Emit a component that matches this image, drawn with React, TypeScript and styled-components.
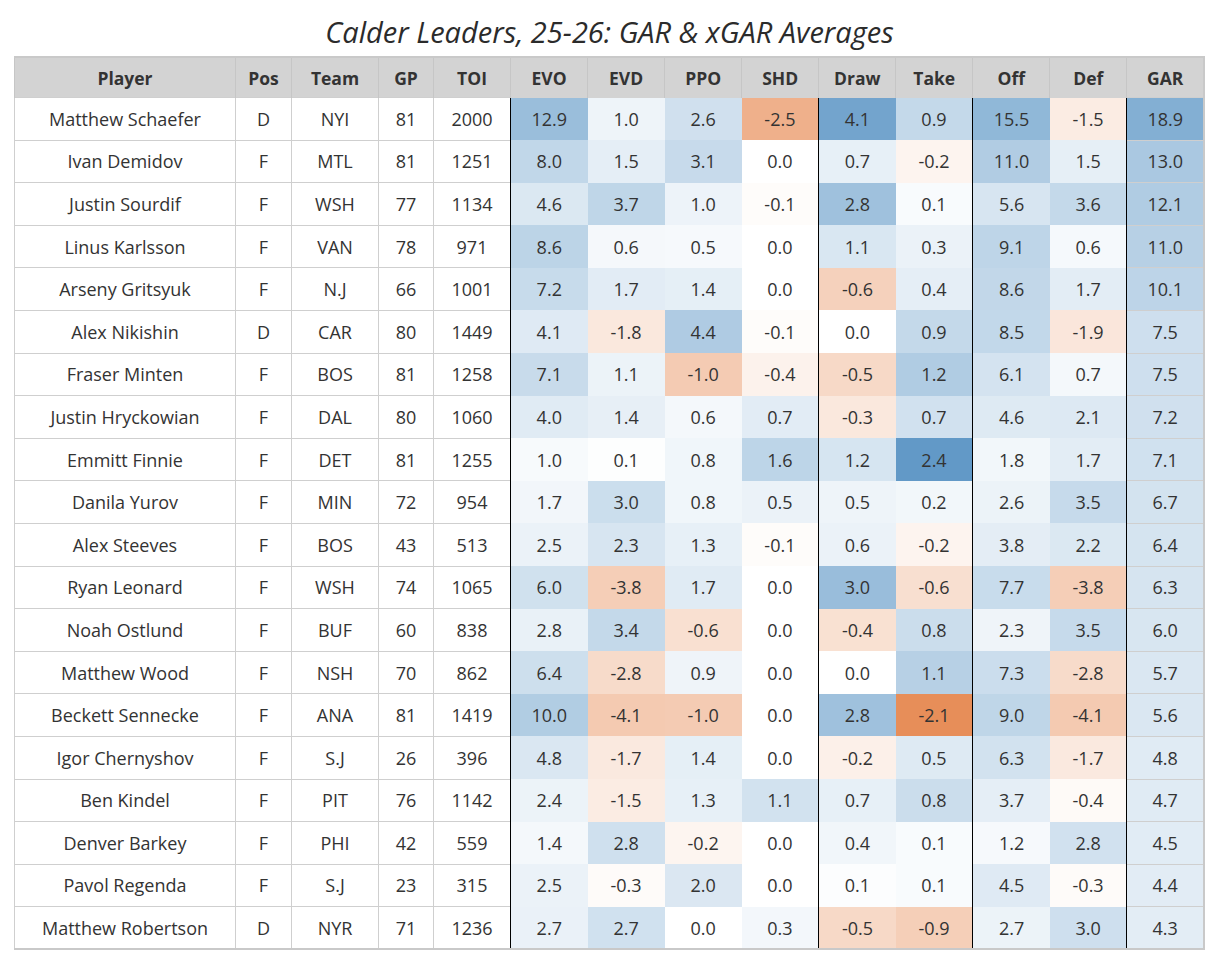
import React from "react";
import styled, { createGlobalStyle } from "styled-components";

type Row = [string, string, string, number, number, ...number[]];

const rows: Row[] = [
  ["Matthew Schaefer", "D", "NYI", 81, 2000, 12.9, 1.0, 2.6, -2.5, 4.1, 0.9, 15.5, -1.5, 18.9],
  ["Ivan Demidov", "F", "MTL", 81, 1251, 8.0, 1.5, 3.1, 0.0, 0.7, -0.2, 11.0, 1.5, 13.0],
  ["Justin Sourdif", "F", "WSH", 77, 1134, 4.6, 3.7, 1.0, -0.1, 2.8, 0.1, 5.6, 3.6, 12.1],
  ["Linus Karlsson", "F", "VAN", 78, 971, 8.6, 0.6, 0.5, 0.0, 1.1, 0.3, 9.1, 0.6, 11.0],
  ["Arseny Gritsyuk", "F", "N.J", 66, 1001, 7.2, 1.7, 1.4, 0.0, -0.6, 0.4, 8.6, 1.7, 10.1],
  ["Alex Nikishin", "D", "CAR", 80, 1449, 4.1, -1.8, 4.4, -0.1, 0.0, 0.9, 8.5, -1.9, 7.5],
  ["Fraser Minten", "F", "BOS", 81, 1258, 7.1, 1.1, -1.0, -0.4, -0.5, 1.2, 6.1, 0.7, 7.5],
  ["Justin Hryckowian", "F", "DAL", 80, 1060, 4.0, 1.4, 0.6, 0.7, -0.3, 0.7, 4.6, 2.1, 7.2],
  ["Emmitt Finnie", "F", "DET", 81, 1255, 1.0, 0.1, 0.8, 1.6, 1.2, 2.4, 1.8, 1.7, 7.1],
  ["Danila Yurov", "F", "MIN", 72, 954, 1.7, 3.0, 0.8, 0.5, 0.5, 0.2, 2.6, 3.5, 6.7],
  ["Alex Steeves", "F", "BOS", 43, 513, 2.5, 2.3, 1.3, -0.1, 0.6, -0.2, 3.8, 2.2, 6.4],
  ["Ryan Leonard", "F", "WSH", 74, 1065, 6.0, -3.8, 1.7, 0.0, 3.0, -0.6, 7.7, -3.8, 6.3],
  ["Noah Ostlund", "F", "BUF", 60, 838, 2.8, 3.4, -0.6, 0.0, -0.4, 0.8, 2.3, 3.5, 6.0],
  ["Matthew Wood", "F", "NSH", 70, 862, 6.4, -2.8, 0.9, 0.0, 0.0, 1.1, 7.3, -2.8, 5.7],
  ["Beckett Sennecke", "F", "ANA", 81, 1419, 10.0, -4.1, -1.0, 0.0, 2.8, -2.1, 9.0, -4.1, 5.6],
  ["Igor Chernyshov", "F", "S.J", 26, 396, 4.8, -1.7, 1.4, 0.0, -0.2, 0.5, 6.3, -1.7, 4.8],
  ["Ben Kindel", "F", "PIT", 76, 1142, 2.4, -1.5, 1.3, 1.1, 0.7, 0.8, 3.7, -0.4, 4.7],
  ["Denver Barkey", "F", "PHI", 42, 559, 1.4, 2.8, -0.2, 0.0, 0.4, 0.1, 1.2, 2.8, 4.5],
  ["Pavol Regenda", "F", "S.J", 23, 315, 2.5, -0.3, 2.0, 0.0, 0.1, 0.1, 4.5, -0.3, 4.4],
  ["Matthew Robertson", "D", "NYR", 71, 1236, 2.7, 2.7, 0.0, 0.3, -0.5, -0.9, 2.7, 3.0, 4.3],
];

const infoCols = [
  { key: "Player", w: 221 },
  { key: "Pos", w: 56 },
  { key: "Team", w: 87 },
  { key: "GP", w: 55 },
  { key: "TOI", w: 77 },
];

// stat columns: scale for positive values, scale for negative values
const stats = [
  { key: "EVO", pos: 21, neg: 10 },
  { key: "EVD", pos: 9.5, neg: 10 },
  { key: "PPO", pos: 9, neg: 2.5 },
  { key: "SHD", pos: 4, neg: 4.1 },
  { key: "Draw", pos: 4.8, neg: 1.7 },
  { key: "Take", pos: 2.5, neg: 2.4 },
  { key: "Off", pos: 23, neg: 10 },
  { key: "Def", pos: 10, neg: 10 },
  { key: "GAR", pos: 25, neg: 10 },
];

const dividers = ["EVO", "Draw", "Off", "GAR"];

const BLUE = [91, 149, 197];
const ORANGE = [228, 126, 65];

function shade(v: number, pos: number, neg: number) {
  const base = v >= 0 ? BLUE : ORANGE;
  const t = Math.min(1, Math.abs(v) / (v >= 0 ? pos : neg));
  const c = base.map((b) => Math.round(255 - (255 - b) * t));
  return `rgb(${c[0]}, ${c[1]}, ${c[2]})`;
}

const GlobalStyle = createGlobalStyle`
  body {
    margin: 0;
    background: #fff;
    font-family: "Open Sans", "Noto Sans", sans-serif;
    color: #333;
  }
`;

const Page = styled.div`
  padding: 0 15px 0 14px;
`;

const Title = styled.h1`
  margin: 0;
  height: 56px;
  line-height: 64px;
  text-align: center;
  font-size: 29px;
  font-style: italic;
  font-weight: 400;
  color: #2b2b2b;
`;

const Table = styled.table`
  width: 1191px;
  table-layout: fixed;
  border-collapse: collapse;
  border: 2px solid #c9c9c9;
  border-left-width: 1px;
`;

const Col = styled.col<{ $w?: number }>`
  width: ${(p) => (p.$w ? `${p.$w}px` : "auto")};
`;

const HeadCell = styled.th`
  height: 39px;
  padding: 0;
  background: #d3d3d3;
  border-left: 1px solid #c6c6c6;
  font-size: 17.5px;
  font-weight: 700;
  color: #333;
  text-align: center;
`;

const BodyRow = styled.tr`
  height: 42.6px;
`;

const Cell = styled.td<{ $divider?: boolean; $grid?: boolean }>`
  padding: 0;
  text-align: center;
  font-size: 18px;
  color: #333;
  border-top: ${(p) => (p.$grid ? "1px solid #cfcfcf" : "none")};
  border-left: ${(p) =>
    p.$divider ? "1px solid #000" : p.$grid ? "1px solid #cfcfcf" : "none"};
`;

export default function App() {
  return (
    <Page>
      <GlobalStyle />
      <Title>Calder Leaders, 25-26: GAR &amp; xGAR Averages</Title>
      <Table>
        <colgroup>
          {infoCols.map((c) => (
            <Col key={c.key} $w={c.w} />
          ))}
          {stats.map((s) => (
            <Col key={s.key} />
          ))}
        </colgroup>
        <thead>
          <tr>
            {infoCols.map((c) => (
              <HeadCell key={c.key}>{c.key}</HeadCell>
            ))}
            {stats.map((s) => (
              <HeadCell key={s.key}>{s.key}</HeadCell>
            ))}
          </tr>
        </thead>
        <tbody>
          {rows.map((r) => (
            <BodyRow key={r[0]}>
              {r.slice(0, 5).map((v, i) => (
                <Cell key={i} $grid>
                  {v}
                </Cell>
              ))}
              {stats.map((s, i) => {
                const v = r[5 + i] as number;
                return (
                  <Cell
                    key={s.key}
                    $divider={dividers.includes(s.key)}
                    $grid={s.key === "GAR"}
                    style={{ background: shade(v, s.pos, s.neg) }}
                  >
                    {v.toFixed(1)}
                  </Cell>
                );
              })}
            </BodyRow>
          ))}
        </tbody>
      </Table>
    </Page>
  );
}
